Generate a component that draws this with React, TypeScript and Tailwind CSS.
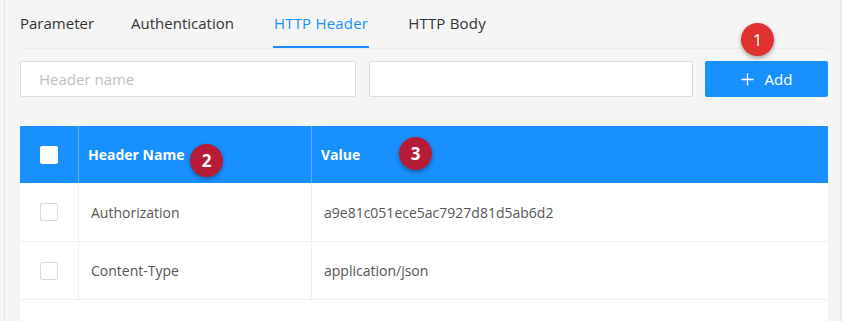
import React from "react";

const font = { fontFamily: '"Open Sans", "Noto Sans", Arial, sans-serif' };

function Badge({ n, className }: { n: string; className: string }) {
  return (
    <div
      className={
        "absolute w-[33px] h-[33px] rounded-full flex items-center justify-center text-white text-[17px] leading-none shadow-[0_2px_4px_rgba(0,0,0,0.35)] " +
        className
      }
    >
      {n}
    </div>
  );
}

function Box({ header }: { header?: boolean }) {
  return (
    <div
      className={
        header
          ? "w-[18px] h-[18px] rounded-[2px] bg-white"
          : "w-[18px] h-[18px] rounded-[2px] bg-white border border-[#d9d9d9]"
      }
    />
  );
}

export default function App() {
  const rows = [
    ["Authorization", "a9e81c051ece5ac7927d81d5ab6d2"],
    ["Content-Type", "application/json"],
  ];
  return (
    <div className="w-[843px] h-[321px] bg-[#f5f5f5] overflow-hidden" style={font}>
      <div className="ml-[4px] w-[837px] h-full border-l border-r border-[#e6e6e6] pl-[15px] pr-[11px]">
        {/* Tabs */}
        <div className="flex h-[49px] border-b border-[#ebebeb] text-[15px]">
          <div className="h-full flex items-center pt-[1px] pb-[2px] text-[#333333]">Parameter</div>
          <div className="ml-[37px] h-full flex items-center pt-[1px] pb-[2px] text-[#333333]">Authentication</div>
          <div className="ml-[39px] h-full flex items-center pt-[1px] px-[1px] border-b-2 border-[#1890ff] text-[#1890ff] tracking-[0.2px]">HTTP Header</div>
          <div className="ml-[39px] h-full flex items-center pt-[1px] pb-[2px] text-[#333333] tracking-[0.2px]">HTTP Body</div>
        </div>

        {/* Inputs */}
        <div className="flex mt-[12px] h-[36px]">
          <div className="w-[336px] h-full bg-white border border-[#dcdcdc] rounded-[2px] flex items-center pl-[18px] text-[15px] text-[#bfbfbf]">
            Header name
          </div>
          <div className="ml-[13px] w-[324px] h-full bg-white border border-[#dcdcdc] rounded-[2px]" />
          <div className="relative ml-[12px] w-[123px] h-full bg-[#1890ff] rounded-[2px] flex items-center justify-center text-white text-[15px] gap-[11px]">
            <svg width="13" height="13" viewBox="0 0 13 13" fill="none">
              <path d="M6.5 0.5V12.5M0.5 6.5H12.5" stroke="white" strokeWidth="1.4" />
            </svg>
            <span>Add</span>
            <Badge n="1" className="bg-[#e0302f] left-[36px] top-[-38px]" />
          </div>
        </div>

        {/* Table */}
        <div className="mt-[29px] w-[808px] bg-white h-[200px]">
          <div className="flex h-[57px] bg-[#1890ff] text-white font-bold text-[14px]">
            <div className="w-[59px] flex items-center justify-center border-r border-[#5aa9fb]">
              <Box header />
            </div>
            <div className="relative w-[233px] flex items-center pl-[9px] border-r border-[#5aa9fb]">
              <span>Header Name</span>
              <Badge n="2" className="bg-[#b71c36] left-[111px] top-[18px]" />
            </div>
            <div className="relative flex-1 flex items-center pl-[9px]">
              <span>Value</span>
              <Badge n="3" className="bg-[#b71c36] left-[87px] top-[11px]" />
            </div>
          </div>
          {rows.map(([k, v], i) => (
            <div key={i} className={"flex border-b border-[#eeeeee] text-[14px] text-[#555555] " + (i === 0 ? "h-[59px]" : "h-[58px]")}>
              <div className="w-[59px] flex items-center justify-center border-r border-[#f0f0f0]">
                <Box />
              </div>
              <div className="w-[233px] flex items-center pl-[12px] border-r border-[#f0f0f0]">{k}</div>
              <div className="flex-1 flex items-center pl-[12px]">{v}</div>
            </div>
          ))}
        </div>
      </div>
    </div>
  );
}
